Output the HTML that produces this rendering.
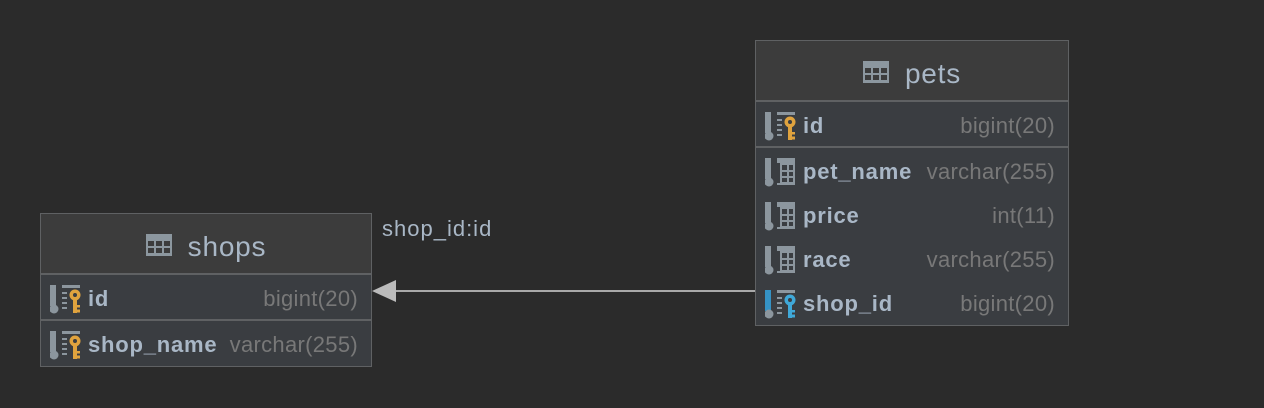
<!DOCTYPE html>
<html><head><meta charset="utf-8"><style>
body{margin:0;width:1264px;height:408px;background:#2b2b2b;font-family:"Liberation Sans","DejaVu Sans",sans-serif;position:relative;overflow:hidden}
.box{position:absolute;background:#3a3d41;border:1px solid #5f6163;box-sizing:border-box}
.hdr{position:absolute;left:0;right:0;top:0;background:#3c3c3c;color:#a9b7c6;font-size:28px;letter-spacing:0.8px;display:flex;align-items:center;justify-content:center;padding-top:5px;box-sizing:border-box}
.hdr svg{margin-right:16px;margin-bottom:4px}
.sep{position:absolute;left:0;right:0;height:2px;background:#5f6163}
.row{position:absolute;left:0;right:0;height:44px;display:flex;align-items:center}
.row svg{position:absolute;left:9px;top:8px}
.n{position:absolute;left:47px;color:#a9b7c6;font-weight:bold;font-size:22px;letter-spacing:0.8px}
.t{position:absolute;right:13px;color:#787878;font-size:22px;letter-spacing:0.3px}
.lbl{position:absolute;left:382px;top:216px;color:#a9b7c6;font-size:22px;letter-spacing:1px}
</style></head><body>
<svg width="0" height="0" style="position:absolute"><defs>
<g id="grid"><rect x="0" y="0" width="26" height="22" fill="#8c979f"/><g fill="#3c3c3c"><rect x="2" y="7" width="6" height="5"/><rect x="10" y="7" width="6" height="5"/><rect x="18" y="7" width="6" height="5"/><rect x="2" y="14" width="6" height="5"/><rect x="10" y="14" width="6" height="5"/><rect x="18" y="14" width="6" height="5"/></g></g>
<g id="col"><rect x="0" y="0" width="6" height="21" fill="#8c969e"/><circle cx="4" cy="24" r="4.5" fill="#8c969e"/><rect x="12" y="0" width="18" height="27" fill="#8c969e"/><g fill="#3a3d41"><rect x="12" y="5" width="3" height="20"/><rect x="17" y="7" width="5" height="5"/><rect x="24" y="7" width="4" height="5"/><rect x="17" y="14" width="5" height="4"/><rect x="24" y="14" width="4" height="4"/><rect x="17" y="20" width="5" height="4"/><rect x="24" y="20" width="4" height="4"/></g></g>
<g id="keycol"><rect x="0" y="0" width="6" height="21" fill="#8c969e"/><circle cx="4" cy="24" r="4.5" fill="#8c969e"/><rect x="12" y="0" width="18" height="3" fill="#8c969e"/><rect x="12" y="7" width="5" height="2" fill="#8c969e"/><rect x="12" y="12" width="5" height="2" fill="#8c969e"/><rect x="12" y="17" width="5" height="2" fill="#8c969e"/><rect x="12" y="22" width="5" height="2" fill="#8c969e"/></g>
<g id="kY"><circle cx="25" cy="10" r="5.5" fill="#e0a33e"/><circle cx="25" cy="10" r="2" fill="#3a3d41"/><rect x="23" y="14" width="4" height="14" fill="#e0a33e"/><rect x="27" y="20" width="3" height="2.5" fill="#e0a33e"/><rect x="27" y="24.5" width="3" height="3" fill="#e0a33e"/></g>
</defs></svg>

<div class="lbl">shop_id:id</div>
<svg style="position:absolute;left:0;top:0" width="1264" height="408"><line x1="392" y1="291" x2="756" y2="291" stroke="#a9a9a9" stroke-width="2"/><polygon points="372,291 396,280 396,302" fill="#bbbbbb"/></svg>

<div class="box" style="left:755px;top:40px;width:314px;height:286px">
 <div class="hdr" style="height:60px"><svg width="26" height="22"><use href="#grid"/></svg>pets</div>
 <div class="sep" style="top:59px"></div>
 <div class="row" style="top:63px"><svg width="34" height="30"><use href="#keycol"/><use href="#kY"/></svg><span class="n">id</span><span class="t">bigint(20)</span></div>
 <div class="sep" style="top:105px"></div>
 <div class="row" style="top:109px"><svg width="34" height="30"><use href="#col"/></svg><span class="n">pet_name</span><span class="t">varchar(255)</span></div>
 <div class="row" style="top:153px"><svg width="34" height="30"><use href="#col"/></svg><span class="n">price</span><span class="t">int(11)</span></div>
 <div class="row" style="top:197px"><svg width="34" height="30"><use href="#col"/></svg><span class="n">race</span><span class="t">varchar(255)</span></div>
 <div class="row" style="top:241px"><svg width="34" height="30"><rect x="0" y="0" width="6" height="21" fill="#3592c4"/><circle cx="4" cy="24" r="4.5" fill="#8c969e"/><rect x="12" y="0" width="18" height="3" fill="#8c969e"/><rect x="12" y="7" width="5" height="2" fill="#8c969e"/><rect x="12" y="12" width="5" height="2" fill="#8c969e"/><rect x="12" y="17" width="5" height="2" fill="#8c969e"/><rect x="12" y="22" width="5" height="2" fill="#8c969e"/><circle cx="25" cy="10" r="5.5" fill="#3fa8d8"/><circle cx="25" cy="10" r="2" fill="#3a3d41"/><rect x="23" y="14" width="4" height="14" fill="#3fa8d8"/><rect x="27" y="20" width="3" height="2.5" fill="#3fa8d8"/><rect x="27" y="24.5" width="3" height="3" fill="#3fa8d8"/></svg><span class="n">shop_id</span><span class="t">bigint(20)</span></div>
</div>

<div class="box" style="left:40px;top:213px;width:332px;height:154px">
 <div class="hdr" style="height:60px"><svg width="26" height="22"><use href="#grid"/></svg>shops</div>
 <div class="sep" style="top:59px"></div>
 <div class="row" style="top:63px"><svg width="34" height="30"><use href="#keycol"/><use href="#kY"/></svg><span class="n">id</span><span class="t">bigint(20)</span></div>
 <div class="sep" style="top:105px"></div>
 <div class="row" style="top:109px"><svg width="34" height="30"><use href="#keycol"/><use href="#kY"/></svg><span class="n">shop_name</span><span class="t">varchar(255)</span></div>
</div>
</body></html>
